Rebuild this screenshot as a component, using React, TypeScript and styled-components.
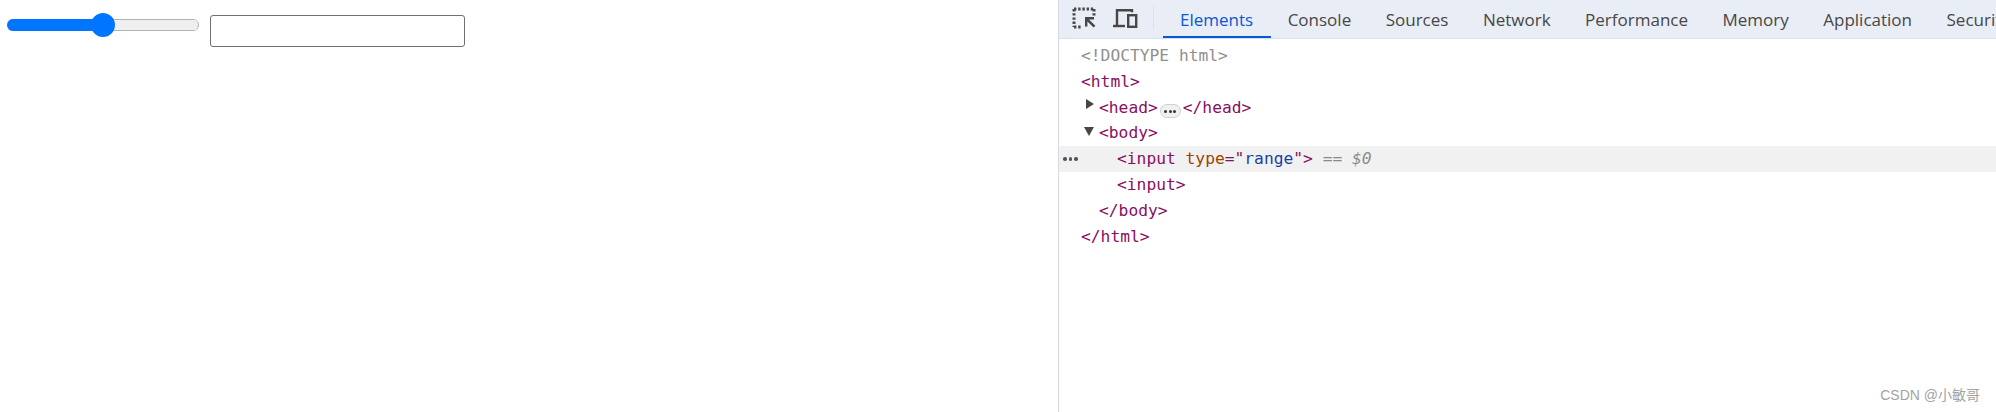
import { useState } from "react";
import styled, { createGlobalStyle } from "styled-components";

const GlobalStyle = createGlobalStyle`
  html, body {
    margin: 0;
    padding: 0;
    background: #fff;
    overflow: hidden;
  }
`;

const Screen = styled.div`
  position: relative;
  display: flex;
  width: 1996px;
  height: 412px;
  overflow: hidden;
`;

const Page = styled.div`
  display: flex;
  align-items: flex-start;
  gap: 11px;
  flex: 0 0 1058px;
  padding: 15px 0 0 7px;
  box-sizing: border-box;
`;

const Slider = styled.input`
  appearance: none;
  width: 192px;
  height: 24px;
  margin: 0;
  margin-top: -2px;
  background: transparent;
  outline: none;

  &::-webkit-slider-runnable-track {
    height: 12px;
    box-sizing: border-box;
    border-radius: 6px;
    border-right: 1px solid #b2b2b2;
    background:
      linear-gradient(#0075ff, #0075ff) left / var(--fill) 100% no-repeat,
      linear-gradient(#b2b2b2, #b2b2b2) top / 100% 1px no-repeat,
      linear-gradient(#b2b2b2, #b2b2b2) bottom / 100% 1px no-repeat,
      #efefef;
  }

  &::-webkit-slider-thumb {
    appearance: none;
    width: 24px;
    height: 24px;
    margin-top: -6px;
    border-radius: 50%;
    background: #0075ff;
  }
`;

const TextField = styled.input`
  width: 255px;
  height: 32px;
  margin: 0;
  padding: 1px 3px;
  box-sizing: border-box;
  border: 1px solid #6f6f6f;
  border-radius: 3px;
  background: #fff;
  outline: none;
`;

const DevTools = styled.div`
  flex: 1;
  min-width: 0;
  border-left: 1px solid #d6d9df;
  display: flex;
  flex-direction: column;
`;

const Toolbar = styled.div`
  display: flex;
  align-items: stretch;
  height: 38px;
  flex: none;
  padding-left: 4px;
  background: #e9edf6;
  border-bottom: 1px solid #d3e3fd;
  overflow: hidden;
`;

const ToolButton = styled.button<{ $width: number }>`
  display: flex;
  align-items: center;
  justify-content: center;
  flex: none;
  width: ${(p) => p.$width}px;
  padding: 0 0 2px;
  border: none;
  background: none;
  color: #474747;
`;

const Divider = styled.div`
  flex: none;
  width: 1px;
  height: 24px;
  margin: 6px 9px 0 8px;
  background: #d3e3fd;
`;

const Tab = styled.div<{ $active?: boolean }>`
  flex: none;
  display: flex;
  align-items: center;
  height: 38px;
  box-sizing: border-box;
  padding: 0 17.5px 0 17px;
  font-family: "Open Sans", "Noto Sans", sans-serif;
  font-size: 17px;
  color: ${(p) => (p.$active ? "#0b57d0" : "#474747")};
  border-bottom: 2px solid ${(p) => (p.$active ? "#0b57d0" : "transparent")};
  border-top: 2px solid transparent;
`;

const Tree = styled.div`
  padding-top: 4px;
  font-family: "DejaVu Sans Mono", "Liberation Mono", monospace;
  font-size: 16.27px;
  color: #87105f;
`;

const Row = styled.div<{ $depth: number; $selected?: boolean }>`
  position: relative;
  height: 25.8px;
  line-height: 26.8px;
  padding-left: ${(p) => 22 + p.$depth * 18}px;
  white-space: pre;
  background: ${(p) => (p.$selected ? "#f1f1f1" : "transparent")};
`;

const Doctype = styled.span`
  color: #8f8f8f;
`;

const AttrName = styled.span`
  color: #994500;
`;

const AttrValue = styled.span`
  color: #1a3fa6;
`;

const Ref = styled.span`
  color: #8a8a8a;
  font-style: italic;
`;

const Arrow = styled.span<{ $open?: boolean }>`
  position: absolute;
  top: ${(p) => (p.$open ? 7 : 4.5)}px;
  left: ${(p) => (p.$open ? 25 : 27)}px;
  width: 0;
  height: 0;
  ${(p) =>
    p.$open
      ? `border-left: 5px solid transparent;
         border-right: 5px solid transparent;
         border-top: 9px solid #474747;`
      : `border-top: 5px solid transparent;
         border-bottom: 5px solid transparent;
         border-left: 8px solid #474747;`}
`;

const Ellipsis = styled.span`
  display: inline-flex;
  align-items: center;
  justify-content: center;
  gap: 1.5px;
  width: 21px;
  height: 14px;
  margin: 0 2px;
  vertical-align: 0;
  border: 1px solid #d0d0d0;
  border-radius: 7px;
  background: #f0f0f0;
  box-sizing: border-box;
`;

const Dot = styled.i`
  display: block;
  width: 3px;
  height: 3px;
  border-radius: 50%;
  background: #333;
`;

const GutterDots = styled.span`
  position: absolute;
  left: 4px;
  top: 11px;
  display: flex;
  gap: 2px;

  ${Dot} {
    width: 3.5px;
    height: 3.5px;
    background: #555;
  }
`;

const Watermark = styled.div`
  position: absolute;
  right: 16px;
  bottom: 8px;
  font-family: "Liberation Sans", "Noto Sans CJK SC", sans-serif;
  font-size: 14px;
  color: #a3a3a3;
`;

const InspectIcon = () => (
  <svg width="24" height="24" viewBox="0 0 24 24" fill="none">
    <path
      d="M2 3h20M2 3v18M22 3v8M2 21h7"
      stroke="#474747"
      strokeWidth="3"
      strokeDasharray="2.4 1.8"
    />
    <path d="M13 11h9v2.4h-5l6.4 6.4-1.8 1.8-6.2-6.2V20.500H13z" fill="#474747" />
  </svg>
);

const DeviceIcon = () => (
  <svg width="26" height="20" viewBox="0 0 26 20" fill="none">
    <path d="M5 17V2.200h15v2" stroke="#474747" strokeWidth="2.400" />
    <path d="M1 18h12" stroke="#474747" strokeWidth="2.400" />
    <rect x="16.200" y="7.200" width="8" height="11.600" stroke="#474747" strokeWidth="2.400" />
  </svg>
);

const tabs = ["Elements", "Console", "Sources", "Network", "Performance", "Memory", "Application", "Security"];

export default function App() {
  const [value, setValue] = useState(50);
  const [text, setText] = useState("");

  return (
    <Screen>
      <GlobalStyle />
      <Page>
        <Slider
          type="range"
          value={value}
          onChange={(e) => setValue(Number(e.target.value))}
          style={{ "--fill": `${value}%` } as React.CSSProperties}
        />
        <TextField value={text} onChange={(e) => setText(e.target.value)} />
      </Page>
      <DevTools>
        <Toolbar>
          <ToolButton $width={42}>
            <InspectIcon />
          </ToolButton>
          <ToolButton $width={40}>
            <DeviceIcon />
          </ToolButton>
          <Divider />
          {tabs.map((tab) => (
            <Tab key={tab} $active={tab === "Elements"}>
              {tab}
            </Tab>
          ))}
        </Toolbar>
        <Tree>
          <Row $depth={0}>
            <Doctype>{"<!DOCTYPE html>"}</Doctype>
          </Row>
          <Row $depth={0}>{"<html>"}</Row>
          <Row $depth={1}>
            <Arrow />
            {"<head>"}
            <Ellipsis>
              <Dot />
              <Dot />
              <Dot />
            </Ellipsis>
            {"</head>"}
          </Row>
          <Row $depth={1}>
            <Arrow $open />
            {"<body>"}
          </Row>
          <Row $depth={2} $selected>
            <GutterDots>
              <Dot />
              <Dot />
              <Dot />
            </GutterDots>
            {"<input "}
            <AttrName>type</AttrName>
            {'="'}
            <AttrValue>range</AttrValue>
            {'">'}
            <Ref> == $0</Ref>
          </Row>
          <Row $depth={2}>{"<input>"}</Row>
          <Row $depth={1}>{"</body>"}</Row>
          <Row $depth={0}>{"</html>"}</Row>
        </Tree>
      </DevTools>
      <Watermark>CSDN @小敏哥</Watermark>
    </Screen>
  );
}
